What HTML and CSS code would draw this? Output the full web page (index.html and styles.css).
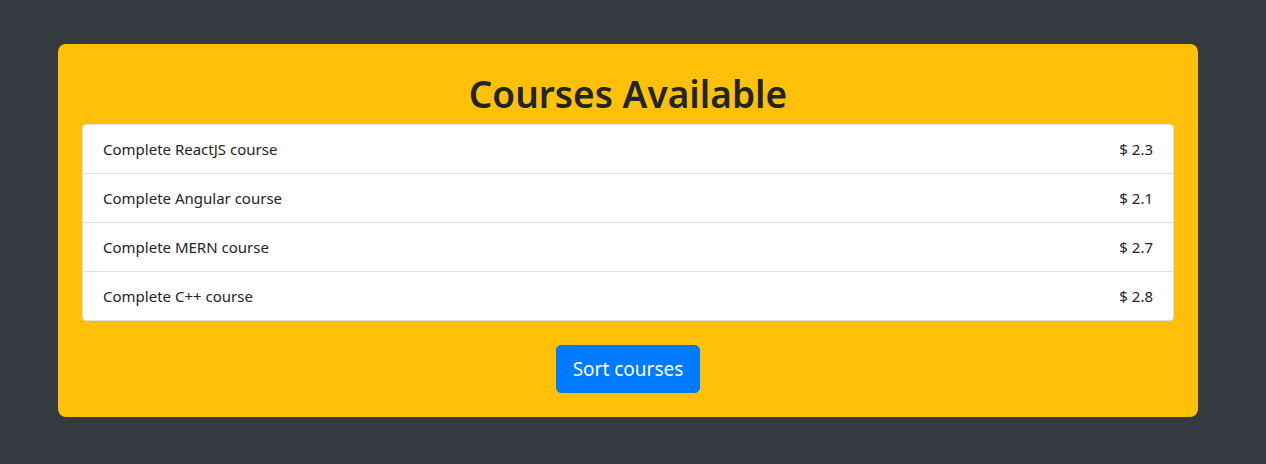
FILE: index.html
```html
<!DOCTYPE html>
<html lang="en">
<head>
<meta charset="utf-8">
<title>Courses Available</title>
<link rel="stylesheet" href="styles.css">
</head>
<body>
<main class="page">
  <section class="panel">
    <h1 class="title">Courses Available</h1>
    <ul class="list">
      <li class="item"><span>Complete ReactJS course</span><span>$ 2.3</span></li>
      <li class="item"><span>Complete Angular course</span><span>$ 2.1</span></li>
      <li class="item"><span>Complete MERN course</span><span>$ 2.7</span></li>
      <li class="item"><span>Complete C++ course</span><span>$ 2.8</span></li>
    </ul>
    <div class="actions">
      <button class="btn" type="button">Sort courses</button>
    </div>
  </section>
</main>
</body>
</html>
```

FILE: styles.css
```css
* { box-sizing: border-box; }
html, body {
  margin: 0;
  padding: 0;
}
body {
  background: #343a40;
  color: #212529;
  font-family: "Noto Sans", "Open Sans", sans-serif;
  font-size: 16px;
  line-height: 1.5;
}
.page {
  padding: 44px 68px 48px 58px;
}
.panel {
  background: #ffc107;
  border-radius: 8px;
  padding: 24px;
}
.title {
  margin: 0 0 8px;
  font-size: 37px;
  line-height: 48px;
  font-weight: 600;
  text-align: center;
  padding-top: 2px;
  height: 48px;
}
.list {
  list-style: none;
  margin: 0;
  padding: 0;
  background: #fff;
  border: 1px solid #dfdfdf;
  border-radius: 4px;
}
.item {
  display: flex;
  justify-content: space-between;
  padding: 12px 20px;
  font-size: 15px;
  line-height: 24px;
}
.item + .item {
  border-top: 1px solid #dfdfdf;
}
.actions {
  display: flex;
  justify-content: center;
  margin-top: 24px;
}
.btn {
  font-family: inherit;
  font-size: 19px;
  line-height: 30px;
  padding: 8px 16px;
  color: #fff;
  background: #007bff;
  border: 1px solid #007bff;
  border-radius: 5px;
  cursor: pointer;
}
```
